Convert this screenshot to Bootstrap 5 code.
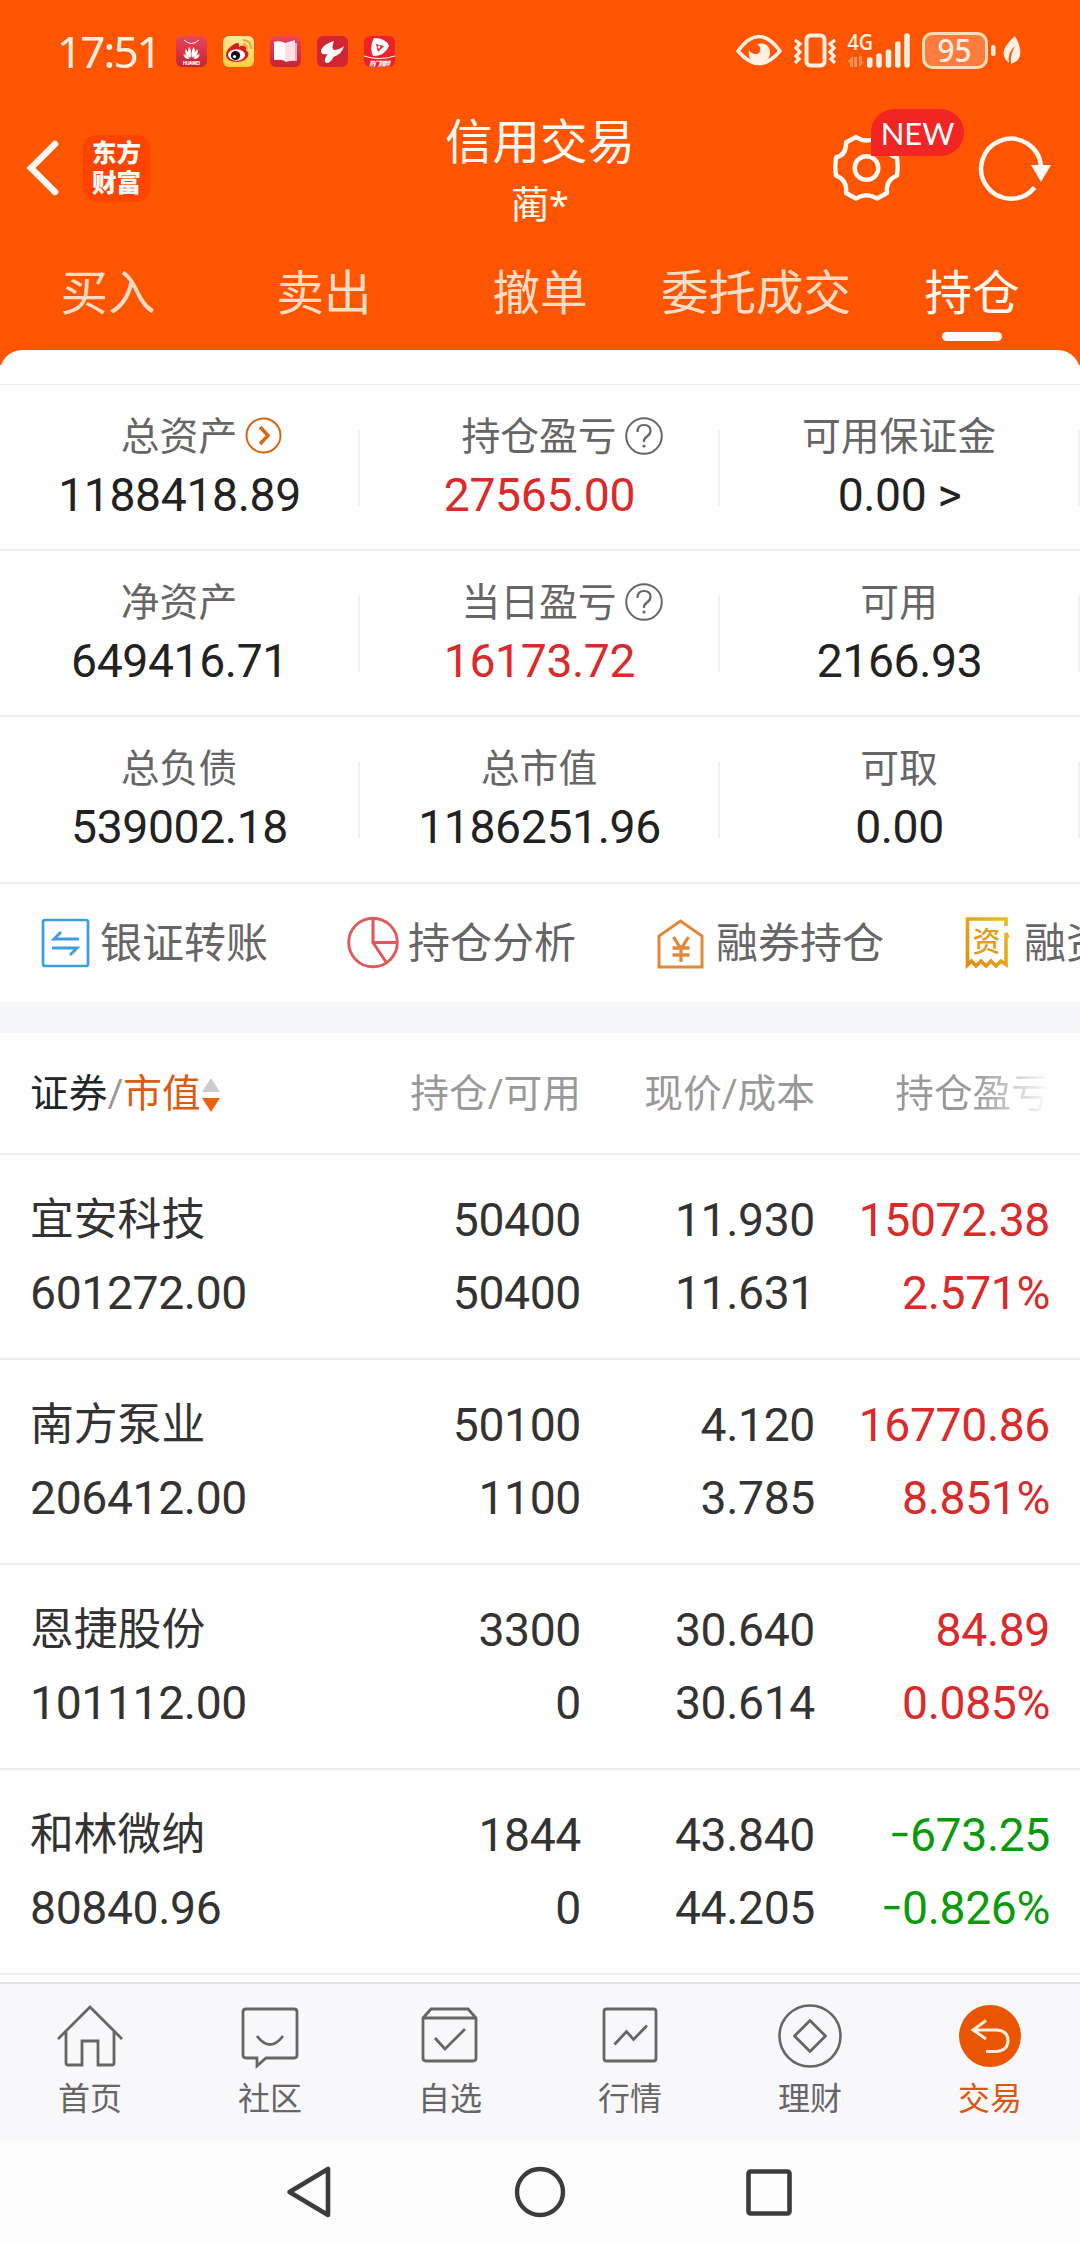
<!DOCTYPE html>
<html lang="zh-CN">
<head>
<meta charset="utf-8">
<meta name="viewport" content="width=device-width, initial-scale=1">
<title>信用交易</title>
<link href="https://cdn.jsdelivr.net/npm/bootstrap@5.3.0/dist/css/bootstrap.min.css" rel="stylesheet">
<style>
  body{width:1080px;height:2244px;overflow:hidden;background:#fff;color:#222;font-family:Roboto,"Noto Sans CJK SC",sans-serif}
  svg{display:block;flex:none;overflow:visible}
  .ln{fill:none;stroke:currentColor}
  .app-top{height:365px;background:#ff5500;color:#fffaf5}
  .status{height:102px;padding:0 60px 0 57px;color:#fff0e3}
  .clock{font-family:"Noto Sans","Noto Sans CJK SC",sans-serif;font-size:44px;line-height:60px;width:119px;letter-spacing:-1.9px}
  .titlebar{height:136px;padding:0 38px 0 27px}
  .brand{width:67px;height:67px;border-radius:14px;background:#ff4400;font-size:24.5px;line-height:30px;font-weight:900;margin-left:25px}
  .title-main{font-size:47.5px;line-height:56px}
  .title-sub{font-size:38px;line-height:44px;margin-top:12px}
  .star{font-family:"Noto Sans",sans-serif;font-size:36px;line-height:1}
  .badge-new{left:38px;top:-26px;width:93px;height:47px;border-radius:24px 24px 24px 0;background:#f22424;font-family:Lato,sans-serif;font-size:31px;line-height:48px;color:#fff}
  .tabs-top{height:112px;font-size:47.5px;color:#ffdcc5}
  .tab-item{width:216px;height:112px;padding-top:21px;line-height:70px}
  .tab-item.on{color:#fffaf5}
  .tab-item.on::after{content:"";display:block;width:60px;height:9px;border-radius:5px;background:#fffaf3;margin:3px auto 0}
  .sheet{height:34px;margin-top:-15px;border-radius:22px 22px 0 0;background:#fff}
  .stat-row{height:166px;border-top:2px solid #eee}
  .stat-row:first-child{margin-top:-1px}
  .stat-row:last-child{height:167px}
  .stat{width:360px;padding-top:28px}
  .stat::after{content:"";position:absolute;right:0;top:45px;width:2px;height:76px;background:#f0f0f0}
  .stat-name{font-size:38.8px;line-height:48px;color:#666;left:-1px}
  .stat-name svg{left:100%;top:4px;margin-left:8px}
  .num{font-size:46.3px;letter-spacing:-.38px}
  .stat .num{line-height:60px;margin-top:4px;margin-left:-1px}
  .red{color:#db2a2a}.green{color:#0b9a0b}
  .links{height:120px;border-top:2px solid #eee;padding-left:40px;font-size:42px;color:#666;white-space:nowrap;overflow:hidden}
  .quick{width:308px;flex:none}
  .quick svg{margin-right:9px;margin-top:-2px}
  .gap-band{height:31px;background:#f6f7f9}
  .grid-row{height:205px;border-top:2px solid #eee;padding:29px 30px 0;color:#333}
  .grid-head{height:120px;padding:2px 30px 0;font-size:38.7px;color:#999}
  .c1{width:320px;flex:none}.c2{width:231px;flex:none}.c3{width:234px;flex:none}.c4{width:235px;flex:none}
  .l1,.l2{line-height:73px;height:73px}
  .c1 .l1{font-size:43.8px}
  .minus{display:inline-block;transform:scaleX(.8);transform-origin:right}
  .fade-out{background:linear-gradient(90deg,#999 0,#999 52%,#fff 100%);-webkit-background-clip:text;background-clip:text;color:transparent}
  .bottom-tabs{height:158px;margin-top:7px;border-top:2px solid #e2e2e4;background:#f8f8fa;color:#666;font-size:32px}
  .bt{width:180px;padding-top:18px}
  .bt div{line-height:44px;margin-top:7px}
  .bt.on{color:#de560f}
  .sysnav{height:104px;background:#fcfcfc;color:#3c3c3c}
</style>
</head>
<body>
<header class="app-top">
  <div class="status d-flex align-items-center">
    <span class="clock">17:51</span>
    <div class="d-flex" style="gap:16px">
      <svg width="31" height="31" viewBox="0 0 31 31"><defs><linearGradient id="pk" x2="0" y2="1"><stop stop-color="#ea465c"/><stop offset="1" stop-color="#c72330"/></linearGradient></defs><rect width="31" height="31" rx="6" fill="url(#pk)"/><path d="M8 4q7.500 7 15 0" fill="none" stroke="#fff"/><g fill="#fff"><path d="M15 22Q10 15 13.500 11q2.500 4 1.500 11M16 22q5-7 1.500-11-2.500 4-1.500 11M14 22q-6-3-4.500-9Q13 16 14 22M17 22q6-3 4.500-9Q18 16 17 22M13.500 23q-6 0-6-5 4 1 6 5M17.500 23q6 0 6-5-4 1-6 5"/></g><text x="15.500" y="28.500" font-size="5" font-weight="700" fill="#fff" text-anchor="middle" textLength="17">HUAWEI</text></svg>
      <svg width="31" height="31" viewBox="0 0 31 31"><defs><linearGradient id="yl" x2="0" y2="1"><stop stop-color="#ffe9a0"/><stop offset="1" stop-color="#ffd23c"/></linearGradient></defs><rect width="31" height="31" rx="6" fill="url(#yl)"/><path d="M3 19C3 13 10 8 14 7c3 0 2 3 2 4 3-2 8-2 7 3 5 3 2 12-9 12C7 26 3 23 3 19z" fill="#d81e1e"/><ellipse cx="13.500" cy="19" rx="8.500" ry="5.800" fill="#fff"/><circle cx="12.500" cy="19.500" r="4.600" fill="#111"/><circle cx="11.500" cy="20.500" r="1.600" fill="#fff"/><path d="M20 4q8 0 8 9M20 8q4 0 4 5" fill="none" stroke="#eda52d" stroke-width="2"/></svg>
      <svg width="31" height="31" viewBox="0 0 31 31"><rect width="31" height="31" rx="6" fill="url(#pk)"/><path d="M18 7h9v18h-9z" fill="#f4a9b3"/><path d="M4 6q6-2 11 1v18q-5-2-11-1z" fill="#fff"/><path d="M15 7l10-3v20l-10 2z" fill="#fde0e4"/></svg>
      <svg width="31" height="31" viewBox="0 0 31 31"><rect width="31" height="31" rx="6" fill="#d22531"/><path d="M17 5C9 7 2 13 4.500 17q1 2 6 1-5 8-1 9 4 0 7-6Q25 18 27 10q-5 4-10 4-3-2 0-9z" fill="#fff"/></svg>
      <svg width="31" height="31" viewBox="0 0 31 31"><rect width="31" height="31" rx="6" fill="#ee2229"/><path d="M10 2q12 0 15 8-4 10-16 10-4-9 1-18z" fill="#fff"/><path d="M12 8l8 2-6 6z" fill="#ee2229"/><circle cx="15" cy="11" r="1.400" fill="#fff"/><path d="M0 20q15 5 31 0" fill="none" stroke="#fff"/><text x="15.500" y="29.500" font-size="6.500" font-weight="700" font-style="italic" fill="#fff" text-anchor="middle" textLength="21">热门视频</text></svg>
    </div>
    <svg class="ms-auto" width="285" height="40" viewBox="735 31 285 40">
      <path d="M738 51q21-29 42 0-21 25-42 0z" fill="none" stroke="currentColor" stroke-width="3.600" stroke-linejoin="round"/>
      <path d="M749 50c-3 18 20 18 21 3 0-8-6-11-13-9 5 3 4 10-1 10-4 0-6-2-7-4z" fill="currentColor"/>
      <rect x="806.500" y="35.500" width="18" height="30" rx="4" class="ln" stroke-width="4"/>
      <path d="M795 40l5 4-4 4 4 4-4 4 3 3-4 4M835 40l-5 4 4 4-4 4 4 4-3 3 4 4" class="ln" stroke-width="3.200"/>
      <text x="847.500" y="50" font-family="Open Sans" font-weight="600" font-size="22" fill="currentColor" textLength="25.500" lengthAdjust="spacingAndGlyphs">4G</text>
      <path d="M869.800 60v5M879 56v9M888.500 52v13M897.800 44v21M907 36v29" class="ln" stroke-width="5.600" stroke-linecap="round"/>
      <g fill="#ff8d58"><path d="M847 62l6-6v11h-3v-5zM854 57v10h3v-10zM859 56v11l5-5h-2v-6z"/></g>
      <rect x="923.500" y="33.500" width="63" height="34" rx="9" fill="#ff7b3e" stroke="#ffdcb8" stroke-width="3"/>
      <text x="954.500" y="62" font-family="Noto Sans" font-weight="500" font-size="32" fill="currentColor" text-anchor="middle" textLength="34" lengthAdjust="spacingAndGlyphs">95</text>
      <rect x="991" y="45" width="4.500" height="11" rx="2" fill="currentColor"/>
      <path d="M1015 36c9 16 6 25-4 28-1-7 1-12 4-18-5 5-7 9-6 17-10-8-5-17 6-27z" fill="currentColor"/>
    </svg>
  </div>
  <div class="titlebar d-flex align-items-start position-relative">
    <svg width="31" height="54" viewBox="0 0 31 54" style="margin-top:39px"><path d="M28 3L4 27l24 24" class="ln" stroke-width="6.500" stroke-linecap="round" stroke-linejoin="miter"/></svg>
    <div class="brand d-flex flex-column align-items-center justify-content-center" style="margin-top:33px"><span>东方</span><span>财富</span></div>
    <div class="position-absolute start-50 translate-middle-x text-center" style="top:13px">
      <div class="title-main">信用交易</div>
      <div class="title-sub">蔺<span class="star">*</span></div>
    </div>
    <div class="position-relative ms-auto" style="margin-top:33px;margin-right:79px">
      <svg width="67" height="67" viewBox="-33.500 -33 67 67"><path class="ln" stroke-width="4.400" stroke-linejoin="round" d="M-10.500-31Q0-24 10.500-31L20.500-25.500Q20-13 30.500-10.500Q32-1 30.500 7.500Q19 12 20.500 25L10.500 30.500Q0 24-10.500 30.500L-20.500 25Q-19 12-30.500 7.500Q-32-1-30.500-10.500Q-20-13-20.500-25.500Z"/><circle class="ln" r="11.800" stroke-width="4.400"/></svg>
      <div class="badge-new position-absolute text-center">NEW</div>
    </div>
    <svg width="72" height="67" viewBox="-32 -33 72 67" style="margin-top:33px;margin-right:-9px"><path d="M23.500 19.500A30 30 0 1 1 30 -2" class="ln" stroke-width="4.500"/><path d="M20-3h20L30 14z" fill="currentColor"/></svg>
  </div>
  <nav class="tabs-top d-flex text-center">
    <div class="tab-item">买入</div><div class="tab-item">卖出</div><div class="tab-item">撤单</div><div class="tab-item">委托成交</div><div class="tab-item on">持仓</div>
  </nav>
</header>
<div class="sheet position-relative"></div>
<section>
  <div class="stat-row d-flex text-center">
    <div class="stat position-relative"><span class="stat-name d-inline-block position-relative">总资产<svg class="position-absolute" width="37" height="37" viewBox="0 0 37 37" color="#dd6414"><circle cx="18.500" cy="18.500" r="17" class="ln" stroke-width="2"/><path d="M15 10l8 8.500-8 8.500" class="ln" stroke-width="3.500"/></svg></span><div class="num">1188418.89</div></div>
    <div class="stat position-relative"><span class="stat-name d-inline-block position-relative">持仓盈亏<svg class="position-absolute" width="38" height="38" viewBox="0 0 38 38"><circle cx="19" cy="19" r="17.800" class="ln" stroke-width="2"/><path d="M12.500 15q0-7 6.500-7t6.500 6q0 3-3.500 5.500T19 25" class="ln" stroke-width="2.200"/><circle cx="19" cy="29" r="1.600" fill="currentColor"/></svg></span><div class="num red">27565.00</div></div>
    <div class="stat position-relative"><span class="stat-name d-inline-block position-relative">可用保证金</span><div class="num">0.00 &gt;</div></div>
  </div>
  <div class="stat-row d-flex text-center">
    <div class="stat position-relative"><span class="stat-name d-inline-block position-relative">净资产</span><div class="num">649416.71</div></div>
    <div class="stat position-relative"><span class="stat-name d-inline-block position-relative">当日盈亏<svg class="position-absolute" width="38" height="38" viewBox="0 0 38 38"><circle cx="19" cy="19" r="17.800" class="ln" stroke-width="2"/><path d="M12.500 15q0-7 6.500-7t6.500 6q0 3-3.500 5.500T19 25" class="ln" stroke-width="2.200"/><circle cx="19" cy="29" r="1.600" fill="currentColor"/></svg></span><div class="num red">16173.72</div></div>
    <div class="stat position-relative"><span class="stat-name d-inline-block position-relative">可用</span><div class="num">2166.93</div></div>
  </div>
  <div class="stat-row d-flex text-center">
    <div class="stat position-relative"><span class="stat-name d-inline-block position-relative">总负债</span><div class="num">539002.18</div></div>
    <div class="stat position-relative"><span class="stat-name d-inline-block position-relative">总市值</span><div class="num">1186251.96</div></div>
    <div class="stat position-relative"><span class="stat-name d-inline-block position-relative">可取</span><div class="num">0.00</div></div>
  </div>
</section>
<section class="links d-flex align-items-center">
  <div class="quick d-flex align-items-center"><svg width="51" height="51" viewBox="0 0 51 51" color="#3a9fe0"><rect x="3" y="3" width="45" height="46" rx="2" class="ln" stroke-width="2.700"/><path d="M39 22H14l7-7M12 31h25l-7 7" class="ln" stroke-width="2.900"/></svg>银证转账</div>
  <div class="quick d-flex align-items-center"><svg width="51" height="51" viewBox="0 0 51 51" color="#e05a5a"><circle cx="25" cy="25.500" r="24.300" class="ln" stroke-width="2.900"/><path d="M25 2v23.500h24M25 25.500L38 45" class="ln" stroke-width="3.100"/></svg>持仓分析</div>
  <div class="quick d-flex align-items-center"><svg width="51" height="51" viewBox="0 0 51 51" color="#e2883a"><path d="M3 50V19L24.500 4 46 19v31z" class="ln" stroke-width="3"/><path d="M17.500 20l7.500 12 7.500-12M16.500 31h17M16.500 38h17M25 31v14" class="ln" stroke="#f58a26" stroke-width="3.300"/></svg>融券持仓</div>
  <div class="quick d-flex align-items-center"><svg width="51" height="51" viewBox="0 0 51 51"><defs><linearGradient id="gd" x1="1" y1="0" x2="0" y2="1"><stop stop-color="#e8bd25"/><stop offset="1" stop-color="#e88a10"/></linearGradient></defs><path d="M42 9V2H3.500v46l4-4 4.500 5 5-5 5 5 5-5 5 5 5-5 5 3.500V16l2 5" fill="none" stroke="url(#gd)" stroke-width="3.600"/><text x="22.500" y="35" font-size="28" fill="#e69c1a" text-anchor="middle" font-weight="500">资</text></svg>融资持仓</div>
</section>
<div class="gap-band"></div>
<section>
  <div class="grid-head d-flex align-items-center">
    <div class="c1 d-flex align-items-center"><span class="text-dark">证券</span><span>/</span><span style="color:#dd5a10">市值</span><svg width="18" height="36" viewBox="0 0 18 36" style="margin-left:1px;margin-top:2px"><path d="M0 15L9 1l9 14z" fill="#ccc"/><path d="M0 21h18L9 35z" fill="#f2600f"/></svg></div>
    <div class="c2 text-end">持仓/可用</div><div class="c3 text-end">现价/成本</div><div class="c4 text-end"><span class="fade-out">持仓盈亏</span></div>
  </div>
  <div class="grid-row d-flex"><div class="c1"><div class="l1">宜安科技</div><div class="l2 num">601272.00</div></div><div class="c2 text-end num"><div class="l1">50400</div><div class="l2">50400</div></div><div class="c3 text-end num"><div class="l1">11.930</div><div class="l2">11.631</div></div><div class="c4 text-end num red"><div class="l1">15072.38</div><div class="l2">2.571%</div></div></div>
  <div class="grid-row d-flex"><div class="c1"><div class="l1">南方泵业</div><div class="l2 num">206412.00</div></div><div class="c2 text-end num"><div class="l1">50100</div><div class="l2">1100</div></div><div class="c3 text-end num"><div class="l1">4.120</div><div class="l2">3.785</div></div><div class="c4 text-end num red"><div class="l1">16770.86</div><div class="l2">8.851%</div></div></div>
  <div class="grid-row d-flex"><div class="c1"><div class="l1">恩捷股份</div><div class="l2 num">101112.00</div></div><div class="c2 text-end num"><div class="l1">3300</div><div class="l2">0</div></div><div class="c3 text-end num"><div class="l1">30.640</div><div class="l2">30.614</div></div><div class="c4 text-end num red"><div class="l1">84.89</div><div class="l2">0.085%</div></div></div>
  <div class="grid-row d-flex"><div class="c1"><div class="l1">和林微纳</div><div class="l2 num">80840.96</div></div><div class="c2 text-end num"><div class="l1">1844</div><div class="l2">0</div></div><div class="c3 text-end num"><div class="l1">43.840</div><div class="l2">44.205</div></div><div class="c4 text-end num green"><div class="l1"><span class="minus">−</span>673.25</div><div class="l2"><span class="minus">−</span>0.826%</div></div></div>
  <div style="border-top:2px solid #eee"></div>
</section>
<nav class="bottom-tabs d-flex text-center">
  <div class="bt d-flex flex-column align-items-center"><svg width="68" height="68" viewBox="0 0 68 68"><path d="M2 37L34 5l32 32M10 30v31q0 2 2 2h14V39h16v24h14q2 0 2-2V30" class="ln" stroke-width="2.800"/></svg><div>首页</div></div>
  <div class="bt d-flex flex-column align-items-center"><svg width="68" height="68" viewBox="0 0 68 68"><path d="M9 8h48q3 0 3 3v43q0 3-3 3H29l-9 8v-8H9q-3 0-3-3V11q0-3 3-3z" transform="translate(1 -1)" class="ln" stroke-width="2.800"/><path d="M21 34q13 17 26 0" class="ln" stroke-width="2.800"/></svg><div>社区</div></div>
  <div class="bt d-flex flex-column align-items-center"><svg width="68" height="68" viewBox="0 0 68 68"><path d="M8 17l8-9h37l8 9v40q0 3-3 3H11q-3 0-3-3zM8 17h53M20 37l10 11 20-20" transform="translate(-1 -1)" class="ln" stroke-width="2.800"/></svg><div>自选</div></div>
  <div class="bt d-flex flex-column align-items-center"><svg width="68" height="68" viewBox="0 0 68 68"><rect x="8" y="7" width="52" height="52" rx="2.500" class="ln" stroke-width="2.800"/><path d="M18.500 42.500l12-13 7 8 13.500-14" class="ln" stroke-width="2.800"/></svg><div>行情</div></div>
  <div class="bt d-flex flex-column align-items-center"><svg width="68" height="68" viewBox="0 0 68 68"><circle cx="34" cy="34" r="30.500" class="ln" stroke-width="2.600"/><path d="M34 18.500L49.500 34 34 49.500 18.500 34z" stroke-linejoin="round" class="ln" stroke-width="2.800"/></svg><div>理财</div></div>
  <div class="bt on d-flex flex-column align-items-center"><svg width="68" height="68" viewBox="0 0 68 68"><circle cx="34" cy="34" r="31" fill="#ea5504"/><path d="M30 18.500L17 28l13 9M17 28h24q11 1 11 10.500T41 49.500H30" fill="none" stroke="#fff0dc" stroke-width="3"/></svg><div>交易</div></div>
</nav>
<footer class="sysnav d-flex align-items-center" style="padding-left:286px">
  <svg width="46" height="52" viewBox="0 0 46 52"><path d="M42 3v46L3.500 26z" stroke-linejoin="round" class="ln" stroke-width="4.600"/></svg>
  <svg width="50" height="50" viewBox="0 0 50 50" style="margin-left:183px"><circle cx="25" cy="25" r="23" class="ln" stroke-width="4.400"/></svg>
  <svg width="46" height="46" viewBox="0 0 46 46" style="margin-left:181px"><rect x="2.500" y="2.500" width="41" height="42" rx="2" class="ln" stroke-width="4.600"/></svg>
</footer>
<script src="https://cdn.jsdelivr.net/npm/bootstrap@5.3.0/dist/js/bootstrap.bundle.min.js"></script>
</body>
</html>
